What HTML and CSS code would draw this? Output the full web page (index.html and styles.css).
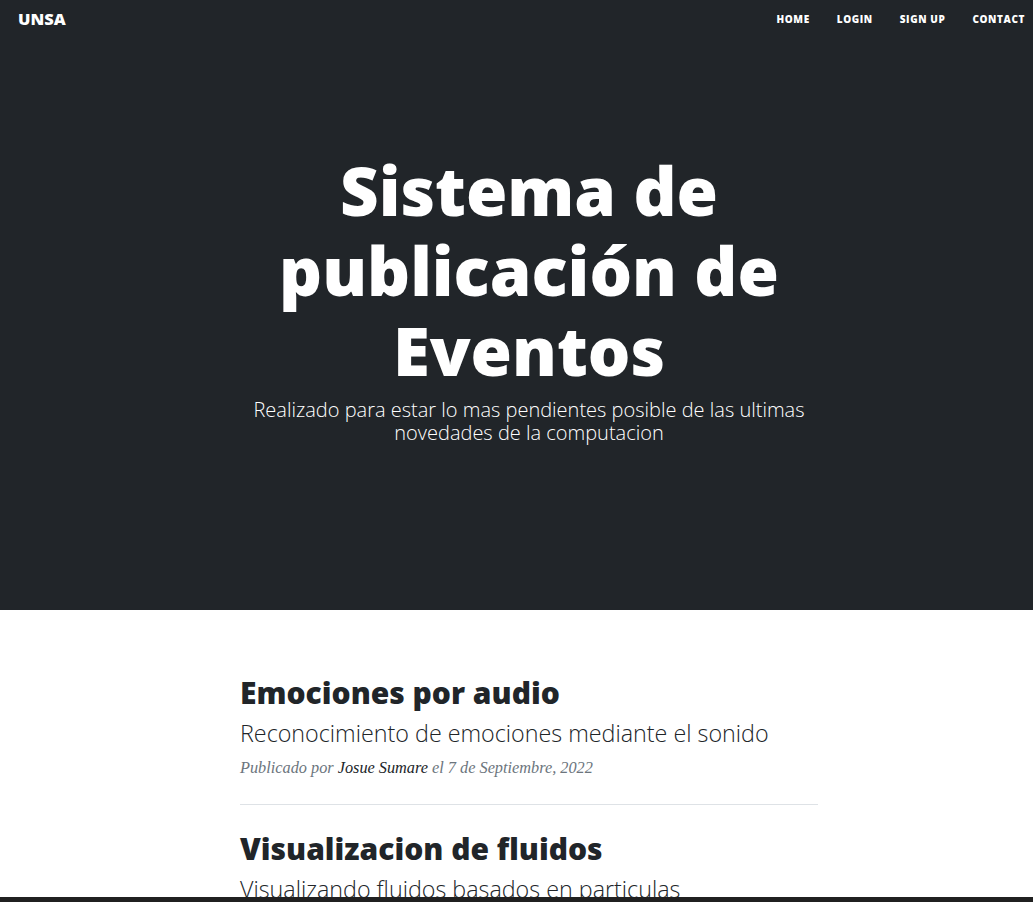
FILE: index.html
```html
<!DOCTYPE html>
<html lang="es">
<head>
<meta charset="utf-8">
<title>UNSA - Sistema de publicación de Eventos</title>
<link rel="stylesheet" href="styles.css">
</head>
<body>
<header class="masthead">
  <nav class="topnav">
    <a class="brand" href="#">UNSA</a>
    <ul class="nav-links">
      <li><a href="#">Home</a></li>
      <li><a href="#">Login</a></li>
      <li><a href="#">Sign up</a></li>
      <li><a href="#">Contact</a></li>
    </ul>
  </nav>
  <div class="shell">
    <div class="site-heading">
      <h1>Sistema de publicación de Eventos</h1>
      <span class="subheading">Realizado para estar lo mas pendientes posible de las ultimas novedades de la computacion</span>
    </div>
  </div>
</header>
<main class="shell">
  <div class="posts">
    <article class="post-preview">
      <a href="#">
        <h2 class="post-title">Emociones por audio</h2>
        <h3 class="post-subtitle">Reconocimiento de emociones mediante el sonido</h3>
      </a>
      <p class="post-meta">Publicado por <a href="#">Josue Sumare</a> el 7 de Septiembre, 2022</p>
    </article>
    <hr class="divider">
    <article class="post-preview">
      <a href="#">
        <h2 class="post-title">Visualizacion de fluidos</h2>
        <h3 class="post-subtitle">Visualizando fluidos basados en particulas</h3>
      </a>
      <p class="post-meta">Publicado por <a href="#">Josue Sumare</a> el 7 de Septiembre, 2022</p>
    </article>
  </div>
</main>
<div class="bottom-bar"></div>
</body>
</html>
```
FILE: styles.css
```css
* { box-sizing: border-box; }
html, body { margin: 0; padding: 0; }
body {
  font-family: "Open Sans", "Liberation Sans", sans-serif;
  color: #212529;
  background: #fff;
  overflow: hidden;
}
a { color: inherit; text-decoration: none; }

.masthead {
  background: #212529;
  height: 610px;
  color: #fff;
}
.topnav {
  display: flex;
  align-items: center;
  justify-content: space-between;
  height: 36px;
  padding: 0 8px 0 18px;
}
.brand {
  font-weight: 800;
  font-size: 16.5px;
  color: #fff;
}
.nav-links {
  display: flex;
  gap: 27px;
  list-style: none;
  margin: 0 0 3px;
  padding: 0;
}
.nav-links a {
  font-size: 10px;
  font-weight: 800;
  letter-spacing: 0.06em;
  text-transform: uppercase;
  color: #fff;
}

.shell {
  padding-left: 25px;
}
.site-heading {
  max-width: 578px;
  margin: 0 auto;
  text-align: center;
  padding-top: 114px;
}
.site-heading h1 {
  font-size: 67px;
  font-weight: 800;
  line-height: 80px;
  margin: 0;
}
.subheading {
  display: block;
  font-size: 20px;
  font-weight: 300;
  line-height: 23px;
  margin-top: 8px;
}

.posts {
  max-width: 578px;
  margin: 0 auto;
  padding-top: 65px;
}
.post-title {
  font-size: 30px;
  font-weight: 800;
  line-height: 36px;
  margin: 0 0 7px;
}
.post-subtitle {
  font-size: 23.3px;
  font-weight: 300;
  line-height: 30px;
  margin: 0;
}
.post-meta {
  font-family: "Liberation Serif", "Times New Roman", serif;
  font-style: italic;
  font-size: 16.3px;
  color: #6c757d;
  margin: 10px 0 0;
}
.post-meta a { color: #212529; }
.divider {
  border: 0;
  border-top: 1px solid #dee2e6;
  margin: 26px 0 26px;
}
.bottom-bar {
  position: fixed;
  left: 0;
  right: 0;
  bottom: 0;
  height: 5px;
  background: #202020;
}
```
